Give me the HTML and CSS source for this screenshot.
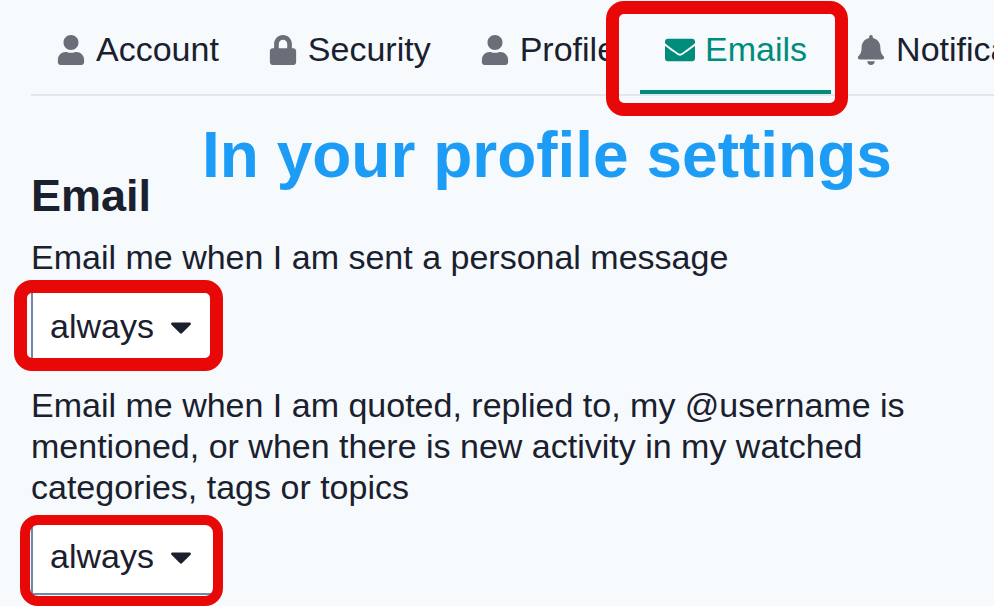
FILE: index.html
```html
<!DOCTYPE html>
<html lang="en">
<head>
    <meta charset="UTF-8">
    <meta name="viewport" content="width=device-width, initial-scale=1.0">
    <title>Email preferences</title>
    <link rel="stylesheet" href="styles.css">
</head>
<body>
    <nav class="tabs">
        <a class="tab" href="#account">
            <svg class="icon" viewBox="-32 0 512 512"><path d="M224 256c70.7 0 128-57.3 128-128S294.7 0 224 0 96 57.3 96 128s57.3 128 128 128zm89.6 32h-16.7c-22.2 10.2-46.9 16-72.9 16s-50.6-5.8-72.9-16h-16.7C60.2 288 0 348.2 0 422.4V464c0 26.5 21.5 48 48 48h352c26.5 0 48-21.5 48-48v-41.6c0-74.2-60.2-134.4-134.4-134.4z"/></svg>
            Account
        </a>
        <a class="tab" href="#security">
            <svg class="icon" viewBox="-32 0 512 512"><path d="M400 224h-24v-72C376 68.2 307.8 0 224 0S72 68.2 72 152v72H48c-26.5 0-48 21.5-48 48v192c0 26.5 21.5 48 48 48h352c26.5 0 48-21.5 48-48V272c0-26.5-21.5-48-48-48zm-104 0H152v-72c0-39.7 32.3-72 72-72s72 32.3 72 72v72z"/></svg>
            Security
        </a>
        <a class="tab" href="#profile">
            <svg class="icon" viewBox="-32 0 512 512"><path d="M224 256c70.7 0 128-57.3 128-128S294.7 0 224 0 96 57.3 96 128s57.3 128 128 128zm89.6 32h-16.7c-22.2 10.2-46.9 16-72.9 16s-50.6-5.8-72.9-16h-16.7C60.2 288 0 348.2 0 422.4V464c0 26.5 21.5 48 48 48h352c26.5 0 48-21.5 48-48v-41.6c0-74.2-60.2-134.4-134.4-134.4z"/></svg>
            Profile
        </a>
        <a class="tab active" href="#emails">
            <svg class="icon" viewBox="0 0 512 512"><path d="M502.3 190.8c3.9-3.1 9.7-.2 9.7 4.7V400c0 26.5-21.5 48-48 48H48c-26.5 0-48-21.5-48-48V195.6c0-5 5.7-7.8 9.7-4.7 22.4 17.4 52.1 39.5 154.1 113.6 21.1 15.4 56.7 47.8 92.2 47.6 35.7.3 72-32.8 92.3-47.6 102-74.1 131.6-96.3 154-113.7zM256 320c23.2.4 56.6-29.2 73.4-41.4 132.7-96.3 142.8-104.7 173.4-128.7 5.8-4.5 9.2-11.5 9.2-18.9v-19c0-26.5-21.5-48-48-48H48c-26.5 0-48 21.5-48 48v19c0 7.4 3.4 14.3 9.2 18.9 30.6 23.9 40.7 32.4 173.4 128.7 16.8 12.2 50.2 41.8 73.4 41.4z"/></svg>
            Emails
            <span class="mark mark-tab"></span>
        </a>
        <a class="tab" href="#notifications">
            <svg class="icon" viewBox="-32 0 512 512"><path d="M224 512c35.32 0 63.97-28.65 63.97-64H160.03c0 35.35 28.65 64 63.97 64zm215.39-149.71c-19.32-20.76-55.47-51.99-55.47-154.29 0-77.7-54.48-139.9-127.94-155.16V32c0-17.67-14.32-32-31.98-32s-31.98 14.33-31.98 32v20.84C118.56 68.1 64.08 130.3 64.08 208c0 102.3-36.15 133.53-55.47 154.29-6 6.45-8.66 14.16-8.61 21.71.11 16.4 12.98 32 32.1 32h383.8c19.12 0 32-15.6 32.1-32 .05-7.55-2.61-15.27-8.61-21.71z"/></svg>
            Notifications
        </a>
    </nav>

    <main class="settings">
        <p class="note">In your profile settings</p>
        <h1>Email</h1>

        <div class="field">
            <label for="personal">Email me when I am sent a personal message</label>
            <div class="dropdown">
                <select id="personal">
                    <option>always</option>
                    <option>only when away</option>
                    <option>never</option>
                </select>
                <svg class="caret" viewBox="10 190 300 172"><path d="M31.3 192h257.3c17.8 0 26.7 21.5 14.1 34.1L174.1 354.7c-7.8 7.8-20.5 7.8-28.3 0L17.2 226.1C4.6 213.5 13.5 192 31.3 192z"/></svg>
                <span class="mark mark-personal"></span>
            </div>
        </div>

        <div class="field">
            <label for="activity">Email me when I am quoted, replied to, my @username is mentioned, or when there is new activity in my watched categories, tags or topics</label>
            <div class="dropdown">
                <select id="activity">
                    <option>always</option>
                    <option>only when away</option>
                    <option>never</option>
                </select>
                <svg class="caret" viewBox="10 190 300 172"><path d="M31.3 192h257.3c17.8 0 26.7 21.5 14.1 34.1L174.1 354.7c-7.8 7.8-20.5 7.8-28.3 0L17.2 226.1C4.6 213.5 13.5 192 31.3 192z"/></svg>
                <span class="mark mark-activity"></span>
            </div>
        </div>
    </main>
</body>
</html>
```
FILE: styles.css
```css
* {
    margin: 0;
    padding: 0;
    box-sizing: border-box;
}

body {
    min-height: 100vh;
    background: #f6fafd;
    color: #1a202d;
    font-family: "Liberation Sans", Arial, sans-serif;
    font-size: 34px;
    line-height: 41px;
    overflow-x: hidden;
}

/* Tabs */
.tabs {
    display: flex;
    margin-left: 31px;
    border-bottom: 2px solid #e2e6ef;
}

.tab {
    position: relative;
    display: flex;
    flex-shrink: 0;
    align-items: center;
    gap: 10px;
    padding: 29px 24px 20px 25px;
    border-bottom: 4px solid transparent;
    color: inherit;
    text-decoration: none;
}

.tab.active {
    color: #008c7b;
    border-bottom-color: #008c7b;
}

.icon {
    width: 30px;
    height: 30px;
    fill: #6a6e78;
}

.active .icon {
    fill: currentColor;
}

/* Settings */
.settings {
    position: relative;
    padding: 73px 31px 11px;
}

h1 {
    font-size: 45px;
    line-height: 54px;
    margin-bottom: 14px;
}

.field + .field {
    margin-top: 20px;
}

.field label {
    display: block;
    margin-bottom: 11px;
}

.dropdown {
    position: relative;
    width: 184px;
}

.dropdown select {
    display: block;
    width: 100%;
    height: 76px;
    padding: 0 17px 2px;
    appearance: none;
    background: #fff;
    border: 2px solid #7288ab;
    border-radius: 0;
    color: inherit;
    font: inherit;
}

.caret {
    position: absolute;
    right: 24px;
    top: 33px;
    width: 20px;
    height: 12px;
    fill: #1a202d;
    pointer-events: none;
}

/* Annotations drawn over the page */
.note {
    position: absolute;
    left: 202px;
    top: 27px;
    color: #1d9cf6;
    font-size: 64px;
    font-weight: bold;
    line-height: 64px;
    white-space: nowrap;
}

.mark {
    position: absolute;
    z-index: 1;
    border: 13px solid #e90808;
    border-radius: 18px;
    pointer-events: none;
}

.mark-tab {
    top: 1px;
    right: -17px;
    bottom: -26px;
    left: -34px;
}

.mark-personal {
    top: -9px;
    right: -8px;
    bottom: -6px;
    left: -17px;
}

.mark-activity {
    top: -4px;
    right: -8px;
    bottom: -11px;
    left: -11px;
    border-width: 10px;
}
```
